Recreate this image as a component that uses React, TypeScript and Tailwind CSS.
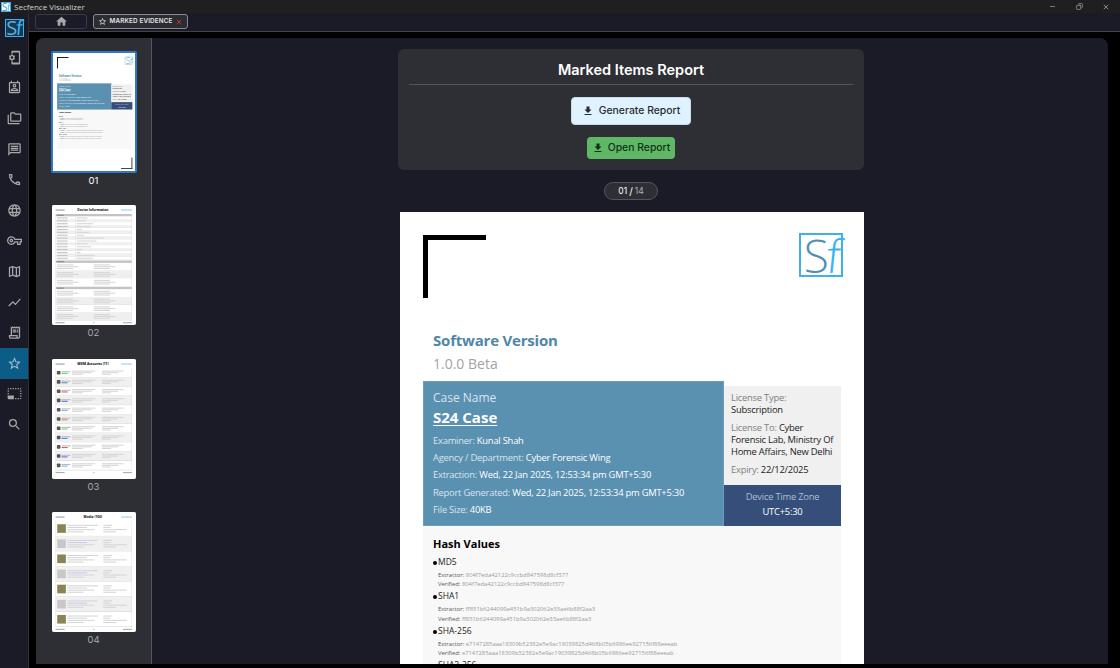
import { Minus, Copy, X } from 'lucide-react';
import {
  MdOutlinePhonelinkSetup, MdOutlinePermContactCalendar, MdOutlineFolderCopy, MdOutlineMessage,
  MdOutlineCall, MdLanguage, MdOutlineVpnKey, MdOutlineMap, MdShowChart, MdOutlineReceiptLong,
  MdOutlineStarBorder, MdOutlinePhotoSizeSelectSmall, MdSearch, MdHome, MdFileDownload,
} from 'react-icons/md';

const NAV = [
  MdOutlinePhonelinkSetup, MdOutlinePermContactCalendar, MdOutlineFolderCopy, MdOutlineMessage,
  MdOutlineCall, MdLanguage, MdOutlineVpnKey, MdOutlineMap, MdShowChart, MdOutlineReceiptLong,
  MdOutlineStarBorder, MdOutlinePhotoSizeSelectSmall, MdSearch,
];
const ACTIVE_NAV = 10;

const HASHES = [
  { name: 'MD5', a: '804f7eda42122c9ccbd847598d8cf377', b: '804f7eda42122c9ccbd847598d8cf377' },
  { name: 'SHA1', a: 'ff851b6244099a451b9a302062e33ae6b88f2aa3', b: 'ff851b6244099a451b9a302062e33ae6b88f2aa3' },
  { name: 'SHA-256', a: 'e7147285aaa18309b52382e5e9ac19039825d468b05b6986ee927156f88eeeab', b: 'e7147285aaa18309b52382e5e9ac19039825d468b05b6986ee927156f88eeeab' },
  { name: 'SHA3-256', a: '2d0b7f5a19c4e8836fa1d07c3be952164ac7d38e15f06b92c84ea7713d60fb29', b: '2d0b7f5a19c4e8836fa1d07c3be952164ac7d38e15f06b92c84ea7713d60fb29' },
];

function Logo({ box, size, border }: { box: string; size: string; border: string }) {
  return (
    <div className={`${box} ${border} shrink-0 border-[#3fb0e8] bg-white flex items-center justify-center font-['Open_Sans',sans-serif] leading-none tracking-tighter ${size}`}>
      <span className="text-[#4f8fb5]">S</span>
      <span className="inline-block -skew-x-6 text-[#35b4f0]">f</span>
    </div>
  );
}

function ReportPage() {
  return (
    <div className="w-[464px] h-[664px] shrink-0 bg-white font-['Open_Sans',sans-serif] px-[23px] pt-[21px] relative">
      <div className="flex justify-between items-start -mr-[2px]">
        <div className="mt-[2px] w-[63px] h-[63px] border-t-[5px] border-l-[5px] border-black" />
        <Logo box="w-[44px] h-[44px]" border="border-[2px]" size="text-[46px] font-light" />
      </div>
      <div className="pl-[10px] mt-[32px] text-[15px] tracking-[-0.2px] leading-[20px] font-bold text-[#4f87a8]">Software Version</div>
      <div className="pl-[10px] mt-[4px] text-[14px] leading-[20px] text-[#a3a3a3]">1.0.0 Beta</div>
      <div className="mt-[7px] w-[418px] flex h-[145px] items-stretch tracking-[-0.23px]">
        <div className="w-[301px] bg-[#5a90b0] border border-[#6d9dba] pl-[9px] pt-[7px] text-[9.4px] leading-[17.2px] text-[#d8e6ee]">
          <div className="text-[12px] tracking-normal leading-[18px]">Case Name</div>
          <div className="text-[15px] tracking-normal leading-[20px] font-bold text-white underline underline-offset-2 mb-[5px]">S24 Case</div>
          <div>Examiner: <span className="text-white">Kunal Shah</span></div>
          <div>Agency / Department: <span className="text-white">Cyber Forensic Wing</span></div>
          <div>Extraction: <span className="text-white">Wed, 22 Jan 2025, 12:53:34 pm GMT+5:30</span></div>
          <div>Report Generated: <span className="text-white">Wed, 22 Jan 2025, 12:53:34 pm GMT+5:30</span></div>
          <div>File Size: <span className="text-white">40KB</span></div>
        </div>
        <div className="flex-1 flex flex-col mt-[5px]">
          <div className="flex-1 bg-[#f0f0f0] pl-[7px] pr-[5px] pt-[6px] text-[9.4px] leading-[12px] text-[#1c1c1c]">
            <div className="text-[#808080]">License Type:</div>
            <div>Subscription</div>
            <div className="mt-[6px]"><span className="text-[#808080]">License To: </span>Cyber Forensic Lab, Ministry Of Home Affairs, New Delhi</div>
            <div className="mt-[6px]"><span className="text-[#808080]">Expiry: </span>22/12/2025</div>
          </div>
          <div className="h-[41px] bg-[#354e7a] text-center pt-[4px] text-[9.4px] leading-[15px]">
            <div className="text-[#aebdd2]">Device Time Zone</div>
            <div className="text-white">UTC+5:30</div>
          </div>
        </div>
      </div>
      <div className="w-[418px] h-[218px] bg-[#f8f8f8] pl-[10px] pt-[10px]">
        <div className="text-[11px] leading-[16px] font-bold text-black mb-[3px]">Hash Values</div>
        {HASHES.map(h => (
          <div key={h.name}>
            <div className="flex items-center gap-[1px] text-[8.5px] leading-[14px] text-[#222]">
              <span className="w-[4px] h-[4px] mt-[2px] rounded-full bg-black" />
              <span>{h.name}</span>
            </div>
            <div className="pl-[5px] mt-[2px] text-[5.83px] leading-[9.2px] text-[#9a9a9a]">
              <div><span className="text-[#555]">Extractor: </span>{h.a}</div>
              <div><span className="text-[#555]">Verified: </span>{h.b}</div>
            </div>
          </div>
        ))}
      </div>
      <div className="absolute right-[23px] bottom-[20px] w-[63px] h-[63px] border-b-[5px] border-r-[5px] border-[#333]" />
    </div>
  );
}

function Bar({ w, tone = 'bg-[#d6d6d6]' }: { w: string; tone?: string }) {
  return <div className={`h-[6px] ${w} ${tone}`} />;
}

function ThumbHeader({ title }: { title: string }) {
  return (
    <div className="flex items-center justify-between mb-[10px] font-['Open_Sans',sans-serif]">
      <Bar w="w-[50px]" tone="bg-[#999]" />
      <div className="text-[18px] leading-[24px] font-bold text-black">{title}</div>
      <Bar w="w-[60px]" tone="bg-[#8fd0f0]" />
    </div>
  );
}

function ThumbFooter() {
  return (
    <div className="flex items-center justify-between mt-[10px]">
      <Bar w="w-[50px]" tone="bg-[#aaa]" />
      <Bar w="w-[6px]" tone="bg-[#aaa]" />
      <Bar w="w-[50px]" tone="bg-[#aaa]" />
    </div>
  );
}

function SectionHead() {
  return <div className="h-[14px] mt-[4px] bg-[#c4c4c4] flex items-center pl-[6px]"><Bar w="w-[40px]" tone="bg-[#888]" /></div>;
}

function TwoCol({ rows, shade }: { rows: number; shade: boolean }) {
  const col = (
    <div className="flex-1 flex flex-col gap-[4px]">
      {Array.from({ length: rows }, (_, i) => <Bar key={i} w={i % 2 ? 'w-[120px]' : 'w-[90px]'} />)}
    </div>
  );
  return (
    <div className={`flex px-[6px] py-[8px] border-x border-b border-[#bbb] ${shade ? 'bg-[#efefef]' : 'bg-white'}`}>
      {col}{col}
    </div>
  );
}

function DevicePage() {
  const wide = ['w-[60px]', 'w-[50px]', 'w-[90px]', 'w-[80px]', 'w-[30px]', 'w-[70px]', 'w-[40px]', 'w-[150px]', 'w-[110px]', 'w-[60px]', 'w-[80px]', 'w-[30px]', 'w-[20px]', 'w-[100px]', 'w-[90px]'];
  return (
    <div className="w-[464px] h-[664px] bg-white px-[20px] pt-[16px]">
      <ThumbHeader title="Device Information" />
      <SectionHead />
      {wide.map((w, i) => (
        <div key={i} className={`h-[16px] flex items-center border-x border-b border-[#bbb] ${i % 2 ? 'bg-[#f0f0f0]' : 'bg-white'}`}>
          <div className="w-[110px] pl-[6px] border-r border-[#bbb] h-full flex items-center"><Bar w="w-[60px]" tone="bg-[#c4c4c4]" /></div>
          <div className="pl-[6px]"><Bar w={w} /></div>
        </div>
      ))}
      <SectionHead />
      {[0, 1, 2].map(i => <TwoCol key={i} rows={3} shade={i % 2 === 1} />)}
      <SectionHead />
      {[0, 1, 2, 3].map(i => <TwoCol key={i} rows={3} shade={i % 2 === 1} />)}
      <ThumbFooter />
    </div>
  );
}

function AccountsPage() {
  const tones = ['bg-[#6fd36f]', 'bg-[#4a90e2]', 'bg-[#e25a5a]', 'bg-[#6a6ae0]', 'bg-[#6ab8f0]', 'bg-[#e8834a]', 'bg-[#6fd36f]', 'bg-[#4a90e2]', 'bg-[#e25a5a]', 'bg-[#6a6ae0]', 'bg-[#6ab8f0]'];
  return (
    <div className="w-[464px] h-[664px] bg-white px-[20px] pt-[16px]">
      <ThumbHeader title="MSIM Accounts (11)" />
      <div className="border-t border-[#bbb]">
        {tones.map((t, i) => (
          <div key={i} className={`h-[51.5px] flex items-center border-x border-b-2 border-[#bbb] ${i % 2 ? 'bg-[#f0f0f0]' : 'bg-white'}`}>
            <div className="w-[90px] pl-[6px] flex items-center gap-[6px]">
              <div className="w-[20px] h-[20px] rounded-[4px] bg-[#555]" />
              <div className="flex flex-col gap-[3px]">
                <Bar w="w-[50px]" tone="bg-[#bbb]" />
                <Bar w="w-[34px]" tone={t} />
              </div>
            </div>
            <div className="flex-1 flex">
              <div className="flex-1 flex flex-col gap-[3px]"><Bar w="w-[130px]" /><Bar w="w-[110px]" /><Bar w="w-[60px]" /></div>
              <div className="flex-1 flex flex-col gap-[3px]"><Bar w="w-[120px]" /><Bar w="w-[90px]" /><Bar w="w-[50px]" /></div>
            </div>
          </div>
        ))}
      </div>
      <ThumbFooter />
    </div>
  );
}

function MediaPage() {
  return (
    <div className="w-[464px] h-[664px] bg-white px-[20px] pt-[16px]">
      <ThumbHeader title="Media (100)" />
      <div className="border-t border-[#bbb]">
        {[0, 1, 2, 3, 4, 5, 6].map(i => (
          <div key={i} className={`h-[84px] flex items-center gap-[8px] border-x border-b-2 border-[#bbb] px-[8px] ${i % 2 ? 'bg-[#f0f0f0]' : 'bg-white'}`}>
            <div className={`w-[48px] h-[48px] shrink-0 ${i % 2 ? 'bg-[#c8c8c8]' : 'bg-[#8a8455]'}`} />
            <div className="flex-1 flex flex-col gap-[6px]">
              <Bar w="w-[170px]" /><Bar w="w-[110px]" tone={i % 2 ? 'bg-[#c9c9f2]' : 'bg-[#d6d6d6]'} /><Bar w="w-[150px]" /><Bar w="w-[90px]" />
            </div>
            <div className="w-[150px] flex flex-col gap-[6px]">
              <Bar w="w-[50px]" /><Bar w="w-[40px]" /><Bar w="w-[130px]" /><Bar w="w-[70px]" />
            </div>
          </div>
        ))}
      </div>
      <ThumbFooter />
    </div>
  );
}

function Thumb({ label, active, children }: { label: string; active?: boolean; children: React.ReactNode }) {
  return (
    <div className="flex flex-col items-center h-[153.3px] shrink-0">
      <div className={`overflow-hidden rounded-[2px] bg-white ${active ? 'w-[86px] h-[122px] -mt-px border-2 border-[#2f78c8]' : 'w-[84px] h-[120px]'}`}>
        <div className="scale-[0.18] origin-top-left">{children}</div>
      </div>
      <div className={`mt-px text-[9.5px] leading-[14px] font-['Inter',sans-serif] ${active ? 'text-white' : 'text-[#a9a9a9]'}`}>{label}</div>
    </div>
  );
}

export default function App() {
  return (
    <div className="h-screen w-screen overflow-hidden flex flex-col bg-black">
      <div className="h-[13px] shrink-0 bg-[#1f1f1f] flex items-center pl-[1px] pr-[10px] font-['Open_Sans',sans-serif]">
        <Logo box="w-[10px] h-[10px]" border="border" size="text-[10px]" />
        <span className="ml-[3px] text-[8px] text-[#d4d4d4]">Secfence Visualizer</span>
        <div className="ml-auto flex items-center gap-[19.5px] text-[#bdbdbd]">
          <Minus size={7} />
          <Copy size={7} className="-scale-x-100" />
          <X size={8} />
        </div>
      </div>

      <div className="flex-1 min-h-0 flex">
        <aside className="w-[29px] shrink-0 bg-[#1a1b26] border-r border-[#2e2f38] flex flex-col pt-[6px]">
          <div className="flex justify-center mb-[5px]">
            <div className="w-[19px] h-[18px] border border-[#3fb0e8] bg-[#123a55] flex items-center justify-center font-['Open_Sans',sans-serif] leading-none tracking-tighter text-[20px]">
              <span className="text-[#6fa9cc]">S</span>
              <span className="inline-block -skew-x-6 text-[#35b4f0]">f</span>
            </div>
          </div>
          {NAV.map((Icon, i) => (
            <div key={i} className={`h-[30.6px] shrink-0 flex items-center justify-center ${i === ACTIVE_NAV ? 'bg-[#0b5d87] text-[#a9c6d6]' : 'text-[#a8a8a8]'}`}>
              <Icon size={15} />
            </div>
          ))}
        </aside>

        <div className="flex-1 min-w-0 flex flex-col">
          <div className="h-[19px] shrink-0 bg-[#1a1b26] border-b border-[#43444c] flex items-start pl-[6px] pt-px gap-[6px]">
            <div className="w-[52px] h-[15px] rounded-[3px] border border-[#3a3b44] flex items-center justify-center text-[#a9a9a9]">
              <MdHome size={13} />
            </div>
            <div className="w-[95px] h-[15px] rounded-[3px] border border-[#8a8a8f] bg-[#2c2d33] flex items-center justify-center gap-[3px] font-['Inter',sans-serif] text-[6.3px] font-semibold tracking-wide text-[#e4e4e4]">
              <MdOutlineStarBorder size={9} />
              <span>MARKED EVIDENCE</span>
              <X size={8} className="text-[#d8392b]" strokeWidth={2.5} />
            </div>
          </div>

          <div className="flex-1 min-h-0 flex pl-[7px] pr-[12px] pt-[6px] pb-[4px]">
            <div className="flex-1 min-w-0 flex rounded-t-lg overflow-hidden bg-[#1a1b26]">
              <div className="w-[116px] shrink-0 bg-[#2e2f35] border-r border-[#55565c] flex flex-col items-center pt-[14px] overflow-hidden">
                <Thumb label="01" active><ReportPage /></Thumb>
                <Thumb label="02"><DevicePage /></Thumb>
                <Thumb label="03"><AccountsPage /></Thumb>
                <Thumb label="04"><MediaPage /></Thumb>
              </div>

              <main className="flex-1 min-w-0 flex flex-col items-center pl-[2px] pt-[11px] overflow-hidden">
                <section className="w-[466px] h-[121px] shrink-0 rounded-md bg-[#2e2f35] px-[11px] font-['Inter',sans-serif] flex flex-col items-center">
                  <h1 className="w-full h-[36px] pt-[11px] border-b border-[#55565c] text-center text-[14.5px] leading-[20px] font-semibold text-white">Marked Items Report</h1>
                  <button className="mt-[12px] w-[120px] h-[28px] rounded-[4px] bg-[#def3ff] border border-[#c9dbe6] flex items-center justify-center gap-[5px] text-[10.4px] font-medium text-[#2a2b30]">
                    <MdFileDownload size={12} /> Generate Report
                  </button>
                  <button className="mt-[12px] w-[88px] h-[22px] rounded-[4px] bg-[#5fb866] flex items-center justify-center gap-[4px] text-[10.4px] font-medium text-[#12301a]">
                    <MdFileDownload size={12} /> Open Report
                  </button>
                </section>
                <div className="mt-[12px] w-[54px] h-[18px] shrink-0 rounded-full bg-[#2e2f35] border border-[#55565c] flex items-center justify-center gap-[2px] font-['Inter',sans-serif] text-[8.5px]">
                  <span className="text-white">01</span>
                  <span className="text-white text-[10px]">/</span>
                  <span className="text-[#b5b5b5]">14</span>
                </div>
                <div className="mt-[12px] ml-[2px]"><ReportPage /></div>
              </main>
            </div>
          </div>
        </div>
      </div>
    </div>
  );
}
